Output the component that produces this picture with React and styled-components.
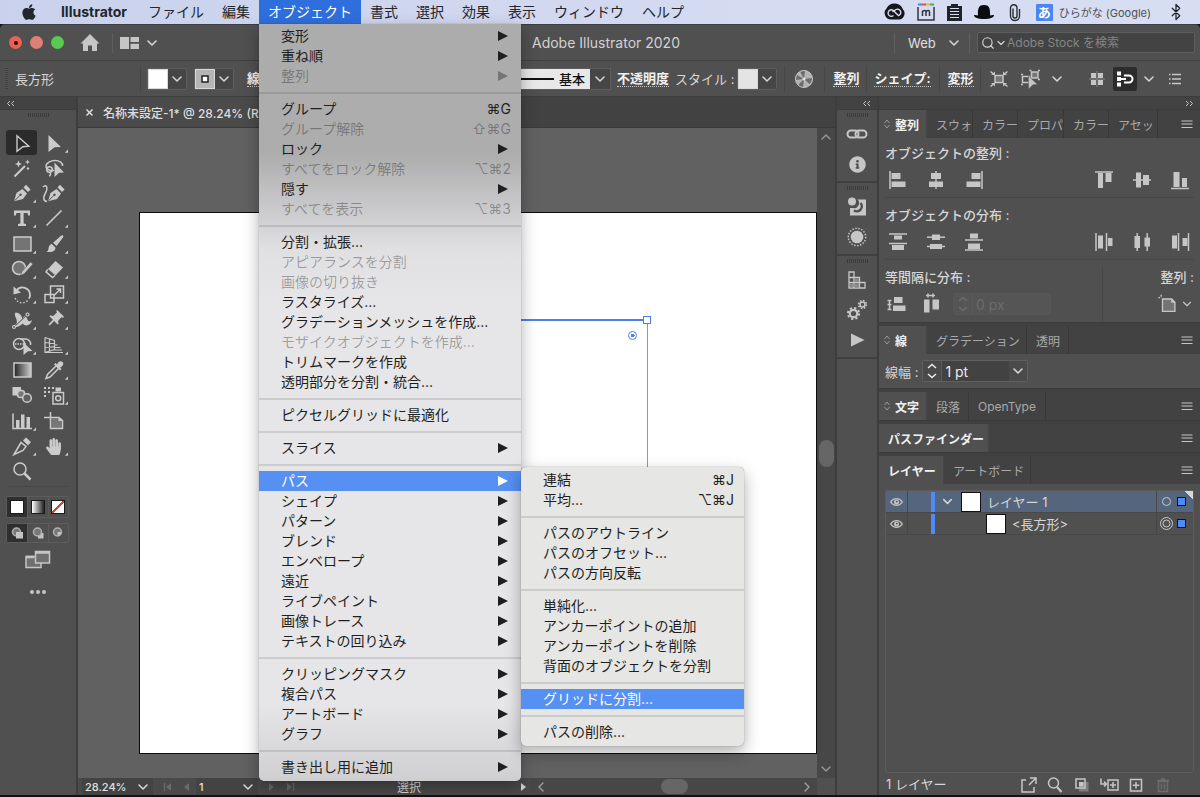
import React from 'react'
import styled, { createGlobalStyle, css } from 'styled-components'
import { FaApple, FaHandPaper, FaInfoCircle } from 'react-icons/fa'
import { MdPushPin } from 'react-icons/md'
import { Bluetooth, ChevronDown, ChevronLeft, ChevronRight, ChevronUp, Search } from 'lucide-react'

const GlobalStyle = createGlobalStyle`
    * { box-sizing: border-box; }
    body {
        margin: 0;
        background: #150f1c;
        font-family: Inter, "Noto Sans CJK JP", "DejaVu Sans", sans-serif;
        font-size: 13px;
        color: #d6d6d6;
    }
    button, input, select {
        font: inherit;
        color: inherit;
        margin: 0;
        padding: 0;
        border: 0;
        background: none;
        border-radius: 0;
    }
    svg { display: block; overflow: visible; flex: none; }
    h2 { margin: 0; font-size: 13px; font-weight: 500; }
`

/* ---------- layout ---------- */

const Screen = styled.div`
    min-height: 100vh;
    display: flex;
    flex-direction: column;
    padding-bottom: 2px;
`
const MenuBar = styled.nav`
    height: 24px;
    display: flex;
    align-items: stretch;
    background: linear-gradient(90deg, #c9d1ec, #d4daf0 60%, #d8def2);
    color: #22262e;
    font-size: 14px;
    position: relative;
    z-index: 5;
`
const AppleMark = styled.button`
    width: 49px;
    padding-left: 8px;
    display: grid;
    place-items: center;
`
const MenuTitle = styled.button`
    padding: 0 9px;
    height: 24px;
    line-height: 24px;
    white-space: nowrap;
    ${p => p.$app && css`width: 90px; padding: 0 5px; font-weight: 700;`}
    ${p => p.$open && css`background: #2f6fdd; color: #fff;`}
`
const MenuHolder = styled.div`
    position: relative;
`
const StatusIcons = styled.div`
    margin-left: auto;
    display: flex;
    align-items: center;
    gap: 12px;
    font-size: 11px;
    overflow: hidden;
    white-space: nowrap;
    padding-right: 15px;
`
const InputMode = styled.span`
    display: flex;
    align-items: center;
    gap: 6px;
    color: #4b505b;
    margin-right: 4px;
`
const Kana = styled.b`
    width: 17px;
    height: 17px;
    display: grid;
    place-items: center;
    background: #4a86f0;
    color: #fff;
    font-size: 13px;
    line-height: 17px;
    border-radius: 1px;
`
const Window = styled.main`
    flex: 1;
    display: flex;
    flex-direction: column;
    background: #3d3d3d;
    border-radius: 5px 5px 0 0;
`
const TitleBar = styled.header`
    height: 37px;
    display: grid;
    grid-template-columns: 1fr auto 1fr;
    align-items: center;
    background: #505050;
    border-top: 1px solid #3a3d46;
    border-bottom: 1px solid #404040;
    border-radius: 5px 5px 0 0;
    padding: 0 5px 0 9px;
`
const TitleSide = styled.div`
    display: flex;
    align-items: center;
    justify-content: ${p => p.$end ? 'flex-end' : 'flex-start'};
`
const Light = styled.button`
    width: 13px;
    height: 13px;
    margin-right: 8px;
    border-radius: 50%;
    background: ${p => p.$color};
    display: grid;
    place-items: center;
    &::after {
        content: '';
        width: 4px;
        height: 4px;
        border-radius: 50%;
        background: ${p => p.$dot ? '#3b0805' : 'transparent'};
    }
`
const IconButton = styled.button`
    width: ${p => p.$w || 24}px;
    height: ${p => p.$h || 24}px;
    display: grid;
    place-items: center;
    color: ${p => p.$dim ? '#6c6c6c' : '#c6c6c6'};
    border-radius: 2px;
    ${p => p.$on && css`background: #2c2c2c; color: #fff;`}
`
const Rule = styled.i`
    width: 1px;
    height: ${p => p.$h || 26}px;
    background: ${p => p.$light ? '#5f5f5f' : '#474747'};
    margin: 0 ${p => p.$m || 0}px;
`
const AppTitle = styled.h1`
    margin: 0;
    padding-left: 8px;
    font-size: 14px;
    font-weight: 400;
    color: #d2d2d2;
`
const SelectBox = styled.label`
    display: grid;
    grid-template-columns: 1fr ${p => p.$arrow || 20}px;
    align-items: center;
    height: ${p => p.$h || 22}px;
    color: #e0e0e0;
    ${p => p.$w && css`width: ${p.$w}px;`}
    select {
        grid-area: 1 / 1 / 2 / 3;
        appearance: none;
        width: 100%;
        height: 100%;
        outline: 0;
    }
    svg {
        grid-area: 1 / 2;
        justify-self: center;
        pointer-events: none;
    }
`
const StockSearch = styled.label`
    width: 218px;
    height: 21px;
    display: flex;
    align-items: center;
    padding: 0 3px;
    background: #434343;
    border: 1px solid #5e5e5e;
    border-radius: 2px;
    input {
        flex: 1;
        min-width: 0;
        font-size: 12px;
        outline: 0;
    }
    input::placeholder { color: #858585; opacity: 1; }
`
const ControlBar = styled.div`
    height: 36px;
    display: flex;
    align-items: center;
    background: #505050;
    border-bottom: 1px solid #3e3e3e;
    padding: 0 13px 0 5px;
    white-space: nowrap;
`
const ControlEnd = styled.div`
    margin-left: auto;
    display: flex;
    align-items: center;
    gap: 4px;
    > button:last-child { margin-left: 6px; }
`
const SideGrip = styled.i`
    width: 3px;
    height: 21px;
    background: repeating-linear-gradient(#3f3f3f 0 1px, #565656 1px 2px);
`
const ObjectKind = styled.span`
    width: 132px;
    padding-left: 7px;
`
const SwatchPicker = styled.div`
    display: flex;
    height: 22px;
    border: 1px solid #5e5e5e;
    border-radius: 2px;
    background: #464646;
    margin-left: ${p => p.$ml || 0}px;
`
const Swatch = styled.button`
    width: 20px;
    height: 20px;
    background: ${p => p.$color};
    border: 1px solid #d8d8d8;
    display: grid;
    place-items: center;
`
const StrokeGroup = styled.div`
    width: 377px;
    padding-left: 13px;
    display: flex;
    align-items: center;
    justify-content: space-between;
`
const OptionLink = styled.a`
    color: #f0f0f0;
    font-weight: 600;
    text-decoration: none;
    line-height: 15px;
    border-bottom: 1px dotted #c8c8c8;
    margin: 0 ${p => p.$m || 0}px;
`
const Profile = styled(SelectBox)`
    background: #464646;
    border: 1px solid #5e5e5e;
    select {
        grid-area: 1 / 1;
        color: #111;
        padding-left: 107px;
        font-weight: 500;
        font-size: 13px;
        background: linear-gradient(#111, #111) 0 50% / 102px 2px no-repeat, #e8e8e8;
    }
`
const Workspace = styled.div`
    flex: 1;
    display: grid;
    grid-template-columns: 76px minmax(0, 1fr) 40px 321px;
    gap: 2px;
`
const Column = styled.div`
    display: flex;
    flex-direction: column;
    background: ${p => p.$bg || '#505050'};
    min-width: 0;
`
const Collapse = styled.div`
    height: 13px;
    flex: none;
    background: #424242;
    border-bottom: 1px solid #3c3c3c;
    display: flex;
    align-items: center;
    justify-content: ${p => p.$side || 'flex-start'};
    padding: 0 6px;
    button { display: block; color: #c8c8c8; }
`
const Grip = styled.i`
    width: 21px;
    height: 4px;
    margin: ${p => p.$m || '3px auto 0'};
    background: repeating-linear-gradient(90deg, #3a3a3a 0 1px, #545454 1px 2px);
`

/* ---------- tool box ---------- */

const ToolGrid = styled.div`
    height: 354px;
    margin: 13px 0 0 6px;
    display: grid;
    grid-template-columns: 32px 32px;
    grid-auto-rows: 1fr;
`
const Tool = styled.button`
    display: grid;
    place-items: center;
    color: #cbcbcb;
    border-radius: 3px;
    width: 31px;
    ${p => p.$on && css`background: #2b2b2b;`}
`
const ModeRow = styled.div`
    display: grid;
    grid-template-columns: repeat(3, 1fr);
    width: 63px;
    height: ${p => p.$h}px;
    margin: ${p => p.$mt}px 0 0 6px;
    border: 1px solid #5c5c5c;
    border-radius: 2px;
    button { display: grid; place-items: center; color: #b0b0b0; }
    button + button { border-left: 1px solid #5c5c5c; }
    button:first-child { background: #2f2f2f; }
`
const Paint = styled.i`
    width: 14px;
    height: 14px;
    border: 1px solid #1b1b1b;
    background: ${p => p.$bg};
`
const ToolRule = styled.hr`
    width: 62px;
    border: 0;
    border-top: 1px solid #494949;
    margin: 2px 0 0 7px;
`
const Below = styled.div`
    display: flex;
    flex-direction: column;
    align-items: center;
    gap: 9px;
    padding-top: 4px;
`

/* ---------- document ---------- */

const Tabs = styled.div`
    height: 31px;
    flex: none;
    background: #424242;
    border-bottom: 1px solid #3a3a3a;
    display: flex;
`
const DocTab = styled.div`
    width: 268px;
    background: #4b4b4b;
    display: flex;
    align-items: center;
    gap: 10px;
    padding: 0 8px;
    font-size: 12px;
    font-weight: 500;
    color: #dedede;
    white-space: nowrap;
`
const DocArea = styled.div`
    flex: 1;
    display: grid;
    grid-template-columns: minmax(0, 1fr) 18px;
    grid-template-rows: 1fr 17px;
`
const Canvas = styled.div`
    background: #616161;
    padding: 84px 0 24px 61px;
    display: flex;
`
const Artboard = styled.div`
    flex: 1;
    position: relative;
    background: #fff;
    border: 1px solid #0c0c0c;
`
const SelectedPath = styled.div`
    position: absolute;
    left: 200px;
    top: 106px;
    width: 308px;
    height: 270px;
    border: 1px solid #6e9bf4;
    border-top: 2px solid #4a80ee;
`
const Anchor = styled.i`
    position: absolute;
    right: -4px;
    top: -5px;
    width: 8px;
    height: 8px;
    background: #fff;
    border: 1px solid #4a80ee;
`
const LiveCorner = styled.i`
    position: absolute;
    right: 10px;
    top: 10px;
    width: 9px;
    height: 9px;
    border: 1px solid #4a80ee;
    border-radius: 50%;
    background: radial-gradient(#4a80ee 0 2px, #fff 2px);
`
const VScroll = styled.div`
    background: #474747;
    color: #9a9a9a;
    display: flex;
    flex-direction: column;
    align-items: center;
    justify-content: space-between;
    padding: 1px 0;
`
const Thumb = styled.i`
    width: ${p => p.$w}px;
    height: ${p => p.$h}px;
    border-radius: 8px;
    background: #666;
`
const StatusBar = styled.div`
    background: #4a4a4a;
    display: flex;
    align-items: stretch;
    font-size: 12px;
    padding-left: 4px;
    min-width: 0;
    height: 17px;
`
const StatusCell = styled.div`
    width: ${p => p.$w}px;
    display: flex;
    align-items: center;
    justify-content: center;
    gap: 8px;
    color: ${p => p.$dim ? '#6a6a6a' : '#d6d6d6'};
    white-space: nowrap;
`
const StatusSelect = styled(SelectBox)`
    height: 17px;
    margin-right: ${p => p.$mr || 0}px;
    background: #434343;
    select { font-size: 11px; font-weight: 500; padding-left: 3px; }
`
const HScroll = styled.div`
    flex: 1;
    background: #474747;
    color: #a0a0a0;
    display: flex;
    align-items: center;
    justify-content: space-between;
    padding: 0 2px;
`

/* ---------- dropdown menus ---------- */

const Sheet = styled.ul`
    position: absolute;
    list-style: none;
    margin: 0;
    color: #1f1f21;
    font-size: 14px;
    box-shadow: 0 6px 16px rgba(0, 0, 0, .32), 0 0 1px rgba(0, 0, 0, .5);
    ${p => p.$sub ? css`
        left: 100%;
        top: -4px;
        width: 223px;
        padding: 3px 0 4px;
        background: #e6e6e4;
        border-radius: 5px;
        z-index: 2;
    ` : css`
        left: 0;
        top: 100%;
        width: 262px;
        padding: 2px 0 4px;
        background: linear-gradient(#acacac 0, #adadae 130px, #cacacc 185px, #e0e0e3 225px, #e6e6e9 280px, #e6e6e9 680px, #cfcfd2 100%);
        border-radius: 0 0 5px 5px;
        z-index: 1;
    `}
`
const Entry = styled.li`
    position: relative;
`
const EntryButton = styled.button`
    width: 100%;
    height: 20px;
    display: flex;
    align-items: center;
    justify-content: space-between;
    padding: 0 10px 0 22px;
    line-height: 20px;
    white-space: nowrap;
    &:disabled { color: rgba(0, 0, 0, .32); }
    ${p => p.$on && css`background: #5690f3; color: #fff;`}
`
const Arrow = styled.i`
    border-left: 10px solid currentColor;
    border-top: 5px solid transparent;
    border-bottom: 5px solid transparent;
    margin-right: 3px;
`
const Split = styled.li`
    height: 13px;
    padding-top: 6px;
    &::after {
        content: '';
        display: block;
        height: 2px;
        background: rgba(0, 0, 0, .11);
    }
`

/* ---------- panels ---------- */

const DockGroup = styled.div`
    border-bottom: 2px solid #404040;
    display: flex;
    flex-direction: column;
    align-items: center;
    padding-bottom: 2px;
    button { height: 30px; }
`
const Panel = styled.section`
    background: #505050;
    border-bottom: 1px solid #3c3c3c;
    margin-bottom: 3px;
    display: flex;
    flex-direction: column;
    ${p => p.$grow && css`flex: 1; margin: 0; border: 0;`}
`
const PanelTabs = styled.div`
    height: 28px;
    display: flex;
    background: #424242;
    > button:last-child { margin-left: auto; margin-right: 1px; height: 28px; }
`
const PanelTab = styled.button`
    width: ${p => p.$w}px;
    padding-left: ${p => p.$arrows ? 5 : 9}px;
    text-align: left;
    overflow: hidden;
    white-space: nowrap;
    font-size: 12px;
    color: #a9a9a9;
    border-right: 1px solid #383838;
    display: flex;
    align-items: center;
    gap: 5px;
    ${p => p.$on && css`background: #505050; color: #f0f0f0; font-weight: 700; border-color: #464646;`}
`
const AlignBody = styled.div`
    padding: 5px 6px 0;
    h2 { height: 20px; line-height: 20px; }
`
const AlignRow = styled.div`
    display: flex;
    align-items: center;
    justify-content: space-between;
    height: 35px;
    padding: 0 2px 0 1px;
    margin-bottom: 7px;
    border-bottom: 1px solid #474747;
`
const IconSet = styled.div`
    display: flex;
    gap: ${p => p.$gap || 14}px;
`
const SpacingRow = styled.div`
    display: grid;
    grid-template-columns: 1fr 92px;
    height: 55px;
    > div:last-child {
        border-left: 1px solid #474747;
        display: flex;
        flex-direction: column;
        align-items: flex-end;
        gap: 5px;
    }
`
const SpacingTools = styled.div`
    display: flex;
    align-items: center;
    gap: 10px;
    margin-top: 5px;
`
const NumberBox = styled.div`
    display: flex;
    align-items: stretch;
    height: 22px;
    width: ${p => p.$w}px;
    border: 1px solid ${p => p.$off ? '#575757' : '#606060'};
    border-radius: 2px;
    color: ${p => p.$off ? '#6c6c6c' : '#ececec'};
    background: ${p => p.$off ? '#555' : '#424242'};
    button {
        width: 18px;
        display: grid;
        place-items: center;
        background: ${p => p.$off ? 'none' : '#4a4a4a'};
    }
    input {
        flex: 1;
        min-width: 0;
        font-size: 14px;
        padding-left: 3px;
        border-left: 1px solid #5b5b5b;
        outline: 0;
    }
    input:disabled { color: #6c6c6c; }
`
const StrokeBody = styled.div`
    height: 34px;
    padding: 0 6px;
    display: flex;
    align-items: center;
    gap: 4px;
`
const LayerList = styled.ul`
    list-style: none;
    flex: 1;
    margin: 6px 6px 0;
    padding: 0;
    border: 1px solid #5c5c5c;
    border-radius: 2px;
`
const LayerRow = styled.li`
    height: 22px;
    display: flex;
    align-items: center;
    font-size: 13px;
    border-bottom: 1px solid #484848;
    background: ${p => p.$on ? 'linear-gradient(225deg, #d8d8d8 6px, #54657c 6px)' : 'transparent'};
`
const EyeCell = styled.button`
    width: 22px;
    height: 22px;
    display: grid;
    place-items: center;
    color: #c3c3c3;
    border-right: 1px solid #474747;
`
const ColorBar = styled.i`
    width: 4px;
    height: 20px;
    background: #4f8bf6;
    margin: 0 ${p => p.$nested ? 51 : 5}px 0 23px;
`
const LayerThumb = styled.i`
    width: 20px;
    height: 20px;
    margin: 0 6px 0 ${p => p.$nested ? 0 : 6}px;
    background: #fff;
    border: 1px solid #111;
`
const Target = styled.span`
    margin-left: auto;
    width: 37px;
    height: 22px;
    border-left: 1px solid #474747;
    display: flex;
    align-items: center;
    gap: 4px;
    padding-left: 3px;
`
const SelectedMark = styled.i`
    width: 9px;
    height: 9px;
    background: #4f8bf6;
    border: 1px solid #111;
`
const LayerFooter = styled.footer`
    height: 22px;
    padding: 0 25px 2px 7px;
    display: flex;
    align-items: center;
    justify-content: space-between;
`

/* ---------- drawings ---------- */

const s = { fill: 'none', stroke: 'currentColor', strokeWidth: 1.5 }

const nib = (
    <>
        <path d="M4 20.300L6.500 12L12.500 8L17 12.500L13 18z" fill="currentColor" />
        <path d="M13.500 6.500L16 3.800L20.600 8.400L18 11z" fill="currentColor" />
        <path d="M4.500 19.800L10 14.300" stroke="#505050" />
        <circle cx="10.500" cy="13.700" r="1.200" fill="#505050" />
    </>
)

// blocks plus guide lines, shared by all the align / distribute buttons
const blocks = (rects, lines) => (
    <>
        {rects.map((r, i) => <rect key={i} x={r[0]} y={r[1]} width={r[2]} height={r[3]} fill="currentColor" />)}
        {lines.map((d, i) => <path key={'l' + i} d={d} stroke="currentColor" strokeWidth="1.500" />)}
    </>
)

const icons = {
    select: <path d="M7 4.800L18.800 15.300L12.800 15.800L7 20.300z" {...s} strokeWidth="1.400" />,
    direct: <path d="M6.500 4L19 16L12.500 16.300L6.500 21z" fill="currentColor" />,
    wand: <><path d="M4.500 20.500L15 10" stroke="currentColor" strokeWidth="2" /><path d="M8.500 4.500l1 2.500 2.500 1-2.500 1-1 2.500-1-2.500-2.500-1 2.500-1zM17.500 3.500l.7 1.800 1.800.7-1.800.7-.7 1.800-.7-1.800-1.800-.7 1.800-.7zM18 11l1.500 1.500-1.500 1.500-1.500-1.500z" fill="currentColor" /></>,
    lasso: <><path d="M12 14.500C6 15 3.500 12 4 9.500S8.500 4.500 13 4.500s8 2.500 7.500 5.500" {...s} /><circle cx="7.500" cy="13.500" r="2.800" {...s} /><path d="M8 16.500c1 1.500.5 3-1 3.500" {...s} /><path d="M12.500 6.500L22 16.500l-4.800.3-4.700 4.200z" fill="currentColor" /></>,
    pen: nib,
    curve: <><g transform="translate(2 0)">{nib}</g><path d="M1 6C5 2 6 8 3.500 12S1 20 5 20.500" {...s} /></>,
    type: <path d="M4 4.500h16v5h-1.800L17.500 7H13.600V17.600l2.400.4V20H8v-2l2.400-.4V7H6.500L5.800 9.500H4z" fill="currentColor" />,
    line: <path d="M4.500 19.500L19.500 4.500" stroke="currentColor" strokeWidth="1.600" />,
    rect: <rect x="4" y="5" width="17" height="14" {...s} fill="#747474" />,
    brush: <><path d="M21 3.500c.6.600.4 1.300-.2 2.200L14.500 14 11 10.800l8-7c.8-.600 1.500-.800 2-.300zM9.800 12l3.600 3.400c.3 3-2.400 5.200-9 4.600 2.500-1.200 1.800-3 2.500-5.200.4-1.500 1.600-2.600 2.900-2.800z" fill="currentColor" /></>,
    shaper: <><circle cx="9" cy="11" r="6.500" {...s} fill="#747474" /><path d="M12 14.500L20.500 5l2.500 2-8.500 9.500-4 2z" fill="currentColor" stroke="#505050" strokeWidth=".6" /></>,
    eraser: <><path d="M13.500 4L21 10.500 13.500 18.500 6 12z" fill="currentColor" /><path d="M5.800 12.500L4 14.800 10.500 20.500 13 18.500" {...s} /></>,
    rotate: <><path d="M6.500 8.500A7.500 7.500 0 0 1 20 13c0 1.500-.4 2.600-1 3.600" {...s} strokeWidth="1.800" /><path d="M3.500 4.500v8l7.500-2z" fill="currentColor" /><path d="M17.500 18.600A7.500 7.500 0 0 1 4.800 14.500" {...s} strokeDasharray="1.500 1.800" /></>,
    scale: <><rect x="8.500" y="4" width="13" height="12" {...s} /><rect x="3" y="12.500" width="9" height="8" {...s} /><path d="M12 13.500L18.500 7M14.500 7h4v4" {...s} /></>,
    width: <><path d="M5.500 4.500c4 0 6.500 3 7 7 1.500-5 3.500-4 4.500-1s2.500 3.500 5 1.500c-1 5.500-6.500 7-9.500 3.500C9.500 19 5 20 3 17.500c3.500-.5 4.500-2.500 3.500-6S4 7 5.500 4.500z" fill="currentColor" /><path d="M4.500 18.500L17 7" stroke="#505050" /><circle cx="4" cy="19" r="1.500" {...s} strokeWidth="1.200" /><circle cx="17.500" cy="6.500" r="1.500" {...s} strokeWidth="1.200" /></>,
    shape: <><circle cx="9" cy="11" r="5.500" {...s} /><path d="M10 6h6a5 5 0 0 1 4.500 6" {...s} /><path d="M5 11h11" {...s} strokeDasharray="1.500 1" /><path d="M13.500 9.500l9 8.500-4.500.3-4.500 3.700z" fill="currentColor" /></>,
    perspective: <path d="M3 4.500v15h8M3 4.500l9.500 3v9L3 19.500M7.500 6v12M3 9.500l9.500 1M3 14.500l9.500-.8M12.500 12l3 0M12.500 14.500h6M11 17h9M10 19.500h11" {...s} strokeWidth="1.200" />,
    gradient: <><defs><linearGradient id="tg"><stop stopColor="#222" /><stop offset="1" stopColor="#ccc" /></linearGradient></defs><rect x="4" y="5" width="17" height="14" {...s} fill="url(#tg)" /></>,
    dropper: <><path d="M14 8L5.500 16.500 4 20.500l4-1.500L16.500 10.500" {...s} /><path d="M12 6.500l6 6 1.500-1.500-1.500-1.500c3.500-1.500 4-4 2.500-5.500s-4-1-5.500 2.500L13.500 5z" fill="currentColor" /></>,
    blend: <><rect x="2.500" y="4" width="8.500" height="8.500" fill="currentColor" /><rect x="7.500" y="7.500" width="7" height="7" rx="3" {...s} fill="#777" /><circle cx="17" cy="15" r="4.300" {...s} fill="#606060" /></>,
    spray: <><rect x="11" y="9.500" width="10.500" height="11.500" {...s} /><rect x="13.500" y="4.500" width="5.500" height="4" fill="currentColor" /><circle cx="16.200" cy="15.200" r="2.500" {...s} /><path d="M2 5h2M6 5h2M10 5h2M2 9h2M6 9h2M2 13h2" stroke="currentColor" strokeWidth="2" /></>,
    graph: <><path d="M3 4.500v15h19" {...s} /><path d="M6 19v-8h3.500v8zM11 19V5.500h3.500V19zM16.500 19V8H20v11z" fill="currentColor" /></>,
    artboard: <><path d="M9.500 9.500H16l3.500 3.500v6h-10z" fill="#777" /><path d="M8.500 3v16.500h12v-8L17 8.500H2" {...s} /><path d="M16.500 8l4.500 4h-4.500z" fill="currentColor" /></>,
    slice: <><path d="M4 20.500L11 8.500 16 12.500 13 16.500z" {...s} /><path d="M13 6.500L16 3.500 21 8 18 11.500z" fill="currentColor" /></>,
    zoom: <><circle cx="10" cy="10" r="6" {...s} /><path d="M14.500 14.500L20.500 20.500" stroke="currentColor" strokeWidth="2.500" /></>,
    screens: <><rect x="0" y="9.500" width="15" height="11" {...s} fill="#6f6f6f" /><rect x="9.500" y="4.500" width="14" height="11.500" {...s} fill="#6f6f6f" /><path d="M9 5.500h15M0 10h8" stroke="currentColor" strokeWidth="2.500" /></>,
    home: <path d="M12 3L21.500 12.500H19V20h-5v-5.500h-4V20H5v-7.500H2.500z" fill="currentColor" />,
    arrange: <path d="M2 6h9v12H2zM12.500 6H21v5h-8.500zM12.500 12.800H21V18h-8.500z" fill="currentColor" />,
    wheel: <><circle cx="12" cy="12" r="8.500" fill="#b4b4b4" /><path d="M12 12L8 4.500a8.500 8.500 0 0 1 5-1zM12 12l8.500-1a8.500 8.500 0 0 1-3 6zM12 12l-1 8.500a8.500 8.500 0 0 1-5-2.500zM12 12l-8.500 1a8.500 8.500 0 0 1 1.500-5z" fill="#6c6c6c" /><circle cx="12" cy="12" r="8.500" {...s} strokeWidth="1" /><circle cx="12" cy="12" r="1.500" fill="#e4e4e4" /></>,
    transformEach: <><rect x="8" y="8.500" width="8" height="7" {...s} fill="#777" /><path d="M3.500 4.500l3 2.500M20.500 4.500l-3 2.500M3.500 19.500l3-2.500M20.500 19.500l-3-2.500" {...s} /><path d="M8 4.500V8H4zM16 4.500V8h4zM8 19.500V16H4zM16 19.500V16h4z" fill="currentColor" /></>,
    isolate: <><rect x="4.500" y="9.500" width="7" height="6" {...s} /><path d="M3 7.500h2M3 17.500h2" {...s} /><rect x="13.500" y="5" width="6.500" height="6" {...s} fill="#777" /><path d="M11.500 3.500h2M20 3.500h2M20 12.500h2" {...s} /><path d="M10.500 9l9 8.500-4.500.3-4.500 4.200z" fill="currentColor" stroke="#505050" strokeWidth=".5" /></>,
    snapGrid: <><path d="M6 6h5v5H6zM13 6h5v5h-5zM6 13h5v5H6zM13 13h5v5h-5z" fill="currentColor" /><path d="M12 4v16M4 12h16" stroke="#888" /></>,
    snap: <><path d="M4 4.500h4v4H4zM4 10h4v4H4zM4 15.500h4v4H4z" fill="currentColor" /><path d="M11 8.500h5a3.500 3.500 0 0 1 0 7h-5M8 12h5" {...s} strokeWidth="2" /></>,
    list: <path d="M6 7.500h1.500M6 12h1.500M6 16.500h1.500M9 7.500h9M9 12h9M9 16.500h9" stroke="currentColor" strokeWidth="1.400" />,
    burger: <path d="M6.500 9h11M6.500 12h11M6.500 15.500h11" stroke="currentColor" strokeWidth="1.200" />,
    link: <><rect x="2.500" y="8.500" width="11" height="7" rx="3.500" {...s} strokeWidth="2" /><rect x="10.500" y="8.500" width="11" height="7" rx="3.500" {...s} strokeWidth="2" /></>,
    asset: <><path d="M12.500 4.500h8.500v16H5v-7.500h3a5 5 0 0 0 4.500-8.500z" fill="currentColor" /><circle cx="7" cy="6.500" r="4" fill="currentColor" /><path d="M15.500 8a5 5 0 0 1-6.500 7.500" {...s} stroke="#505050" strokeWidth="2.500" /></>,
    appearance: <><circle cx="12" cy="12" r="6.300" fill="currentColor" /><circle cx="12" cy="12" r="8.700" {...s} strokeDasharray="1.500 1.500" /></>,
    swatches: <><path d="M4 4h5v16H4zM4 9.500h10.500V20M4 14.500h16V20H4M14.500 14.500V20" {...s} strokeWidth="1.300" /><path d="M5 15.500h3v4H5zM9.500 15.500h4.500v4H9.500zM9.500 10.500h4.500v3.500H9.500z" fill="#8b8b8b" /></>,
    gears: <><circle cx="8.500" cy="15.500" r="3.700" {...s} strokeWidth="2.200" /><circle cx="8.500" cy="15.500" r="5.600" {...s} strokeWidth="2" strokeDasharray="2.200 2.200" /><circle cx="17.500" cy="6.500" r="2.500" {...s} strokeWidth="1.600" /><circle cx="17.500" cy="6.500" r="4" {...s} strokeDasharray="1.600 1.540" /></>,
    play: <path d="M6 5.500L19.500 12 6 18.500z" fill="currentColor" />,
    hLeft: blocks([[5.500, 5, 9, 6], [5.500, 13.500, 14, 5.500]], ['M4 3v18']),
    hCenter: blocks([[7, 5, 10, 6], [5, 13.500, 14, 5.500]], ['M12 3v18']),
    hRight: blocks([[9.500, 5, 9, 6], [4.500, 13.500, 14, 5.500]], ['M20 3v18']),
    vTop: blocks([[6, 5, 5, 15], [13.500, 5, 6, 9]], ['M3 4h18']),
    vMiddle: blocks([[6, 4.500, 5, 15], [13, 7, 6, 10]], ['M3 12h18']),
    vBottom: blocks([[5.500, 4, 6, 15], [14, 10, 5, 9]], ['M3 20.500h18']),
    dTop: blocks([[8, 5.500, 8, 4], [6, 15, 12, 5]], ['M3 4h18', 'M3 13.500h18']),
    dMiddle: blocks([[8, 4.500, 8, 5.500], [6, 14, 12, 5]], ['M3 7.200h18', 'M3 16.500h18']),
    dBottom: blocks([[8, 3.500, 8, 5], [6, 13.500, 12, 5.500]], ['M3 10h18', 'M3 20h18']),
    dLeft: blocks([[6, 5.500, 5, 13], [16, 8, 4.500, 8]], ['M4 3v18', 'M14.500 3v18']),
    dCenter: blocks([[4.500, 6, 5.500, 12], [14.500, 7.500, 5.500, 9]], ['M7.200 3v18', 'M17.200 3v18']),
    dRight: blocks([[4, 5.500, 5, 13], [14.500, 8, 5, 8]], ['M10.500 3v18', 'M20.500 3v18']),
    vSpace: blocks([[9, 5, 8.500, 6], [8, 13.500, 12.500, 5.500]], ['M4.500 8v10', 'M2.500 8.500h4', 'M2.500 12.500h4', 'M2.500 17.500h4']),
    hSpace: blocks([[5, 7.500, 5.500, 13], [13.500, 7.500, 6.500, 10]], ['M7 3.500h9', 'M9 1.500v4', 'M14 1.500v4']),
    alignTo: <><path d="M6 6.500h10l3.500 3.500v10H6z" {...s} fill="#747474" /><path d="M1.500 5h2M4.500 2v2" {...s} /><path d="M15.500 6v4.500H20z" fill="currentColor" /></>,
    export: <path d="M10 7H6v12h12v-5M14 5h6v6M19.500 5.500L13 12" {...s} />,
    find: <><circle cx="10.500" cy="10" r="5" {...s} /><path d="M14 14l4.500 5" stroke="currentColor" strokeWidth="2.200" /></>,
    mask: <><path d="M9 9h9.500v9.500H9z" fill="#7c7c7c" /><rect x="6" y="6" width="9" height="9" {...s} /><path d="M9 9h4.500v4.500H9z" fill="currentColor" /></>,
    sublayer: <><rect x="11" y="7" width="10" height="10" {...s} /><path d="M16 9v6M13 12h6M4 5.500V11h5M7 8.500L9.500 11 7 13.500" {...s} /></>,
    add: <><rect x="6.500" y="6.500" width="11" height="11.500" {...s} /><path d="M12 9v6.500M8.800 12.200h6.500" {...s} /></>,
    trash: <path d="M7.500 8.500h9v10h-9zM6 7.500h12M10 6h4M10.500 10.500v6M13.500 10.500v6" {...s} />,
}

const Icon = ({ name, size = 24, more }) => (
    <svg width={size} height={size} viewBox="0 0 24 24" aria-hidden="true">
        {icons[name]}
        {more && <path d="M26 18.500v3.200h-3.200z" fill="currentColor" />}
    </svg>
)

const Down = ({ size = 16 }) => <ChevronDown size={size} strokeWidth={2.4} color="#d4d4d4" />

const Chevrons = ({ flip }) => (
    <svg width="9" height="7" viewBox="0 0 9 7">
        <path d={flip ? 'M1 1l2.500 2.500L1 6M5 1l2.500 2.500L5 6' : 'M4 1L1.500 3.500 4 6M8 1L5.500 3.500 8 6'} fill="none" stroke="currentColor" />
    </svg>
)
const Diamond = () => (
    <svg width="6" height="10" viewBox="0 0 6 10">
        <path d="M.5 4L3 1l2.500 3M.5 6L3 9l2.500-3" fill="none" stroke="#9a9a9a" />
    </svg>
)
const Eye = () => (
    <svg width="13" height="10" viewBox="0 0 13 10">
        <path d="M.7 5C3.500.5 9.500.5 12.300 5 9.500 9.500 3.500 9.500.7 5z" fill="none" stroke="currentColor" strokeWidth="1.400" />
        <circle cx="6.500" cy="5" r="2.500" fill="currentColor" />
        <circle cx="6.800" cy="4.600" r=".9" fill="#505050" />
    </svg>
)
const Stepper = () => (
    <svg width="10" height="16" viewBox="0 0 10 16">
        <path d="M1 5l4-3.500L9 5M1 11l4 3.500L9 11" fill="none" stroke="currentColor" strokeWidth="1.500" />
    </svg>
)

/* ---------- data ---------- */

const tools = [
    ['select', '選択ツール'], ['direct', 'ダイレクト選択', 1],
    ['wand', '自動選択'], ['lasso', 'なげなわ'],
    ['pen', 'ペン', 1], ['curve', '曲線'],
    ['type', '文字', 1], ['line', '直線', 1],
    ['rect', '長方形ツール', 1], ['brush', 'ブラシ', 1],
    ['shaper', 'Shaper', 1], ['eraser', '消しゴム', 1],
    ['rotate', '回転', 1], ['scale', '拡大・縮小', 1],
    ['width', '線幅ツール', 1], ['pin', 'パペットワープ', 1],
    ['shape', 'シェイプ形成', 1], ['perspective', '遠近グリッド', 1],
    ['gradient', 'グラデーションツール'], ['dropper', 'スポイト', 1],
    ['blend', 'ブレンドツール'], ['spray', 'シンボルスプレー', 1],
    ['graph', '棒グラフ', 1], ['artboard', 'アートボードツール'],
    ['slice', 'スライスツール', 1], ['hand', '手のひら', 1],
    ['zoom', 'ズーム'],
]

// a string is a plain entry, '-' a separator
const pathMenu = [
    { label: '連結', keys: '⌘J' },
    { label: '平均...', keys: '⌥⌘J' },
    '-',
    'パスのアウトライン', 'パスのオフセット...', 'パスの方向反転',
    '-',
    '単純化...', 'アンカーポイントの追加', 'アンカーポイントを削除', '背面のオブジェクトを分割',
    '-',
    { label: 'グリッドに分割...', on: true },
    '-',
    'パスの削除...',
]
const sub = label => ({ label, more: true })
const off = (label, keys) => ({ label, keys, disabled: true })

const objectMenu = [
    sub('変形'), sub('重ね順'), { label: '整列', more: true, disabled: true },
    '-',
    { label: 'グループ', keys: '⌘G' }, off('グループ解除', '⇧⌘G'), sub('ロック'),
    off('すべてをロック解除', '⌥⌘2'), sub('隠す'), off('すべてを表示', '⌥⌘3'),
    '-',
    '分割・拡張...', off('アピアランスを分割'), off('画像の切り抜き'), 'ラスタライズ...',
    'グラデーションメッシュを作成...', off('モザイクオブジェクトを作成...'), 'トリムマークを作成', '透明部分を分割・統合...',
    '-',
    'ピクセルグリッドに最適化',
    '-',
    sub('スライス'),
    '-',
    { label: 'パス', more: true, on: true, items: pathMenu },
    sub('シェイプ'), sub('パターン'), sub('ブレンド'), sub('エンベロープ'), sub('遠近'),
    sub('ライブペイント'), sub('画像トレース'), sub('テキストの回り込み'),
    '-',
    sub('クリッピングマスク'), sub('複合パス'), sub('アートボード'), sub('グラフ'),
    '-',
    sub('書き出し用に追加'),
]

function Menu({ items, nested }) {
    return (
        <Sheet $sub={nested}>
            {items.map((it, i) => {
                if (it === '-') return <Split key={i} role="separator" />
                const item = typeof it === 'string' ? { label: it } : it
                return (
                    <Entry key={i}>
                        <EntryButton $on={item.on} disabled={item.disabled}>
                            <span>{item.label}</span>
                            {item.more ? <Arrow /> : <span>{item.keys}</span>}
                        </EntryButton>
                        {item.items && <Menu items={item.items} nested />}
                    </Entry>
                )
            })}
        </Sheet>
    )
}

function Tabset({ tabs }) {
    return (
        <PanelTabs>
            {tabs.map(([label, w, on, arrows], i) => (
                <PanelTab key={i} $w={w} $on={on} $arrows={arrows}>
                    {arrows && <Diamond />}
                    {label}
                </PanelTab>
            ))}
            <IconButton aria-label="パネルメニュー"><Icon name="burger" /></IconButton>
        </PanelTabs>
    )
}

const Buttons = ({ names, gap }) => (
    <IconSet $gap={gap}>
        {names.map(n => <IconButton key={n} aria-label={n}><Icon name={n} /></IconButton>)}
    </IconSet>
)

function TopMenu() {
    return (
        <MenuBar>
            <AppleMark aria-label="Apple"><FaApple size={18} /></AppleMark>
            <MenuTitle $app>Illustrator</MenuTitle>
            <MenuTitle>ファイル</MenuTitle>
            <MenuTitle>編集</MenuTitle>
            <MenuHolder>
                <MenuTitle $open>オブジェクト</MenuTitle>
                <Menu items={objectMenu} />
            </MenuHolder>
            {['書式', '選択', '効果', '表示', 'ウィンドウ', 'ヘルプ'].map(m => <MenuTitle key={m}>{m}</MenuTitle>)}
            <StatusIcons>
                <svg width="21" height="16" viewBox="0 0 21 16">
                    <path d="M7 15.500A6.500 6.500 0 0 1 2.500 4.500 9 9 0 0 1 19 5.500a6 6 0 0 1-4 10z" fill="#15171c" />
                    <path d="M9.500 11.500L8 12.300a3.300 3.300 0 1 1 1.200-6l4.800 5M8.500 8l3.500-2.500a3.300 3.300 0 1 1 2 6.200" fill="none" stroke="#d6dcf1" strokeWidth="1.400" />
                </svg>
                <svg width="18" height="18" viewBox="0 0 18 18">
                    <path d="M1 4v13h16V4" fill="none" stroke="#33363d" strokeWidth="1.500" />
                    <path d="M1 1.500h4" stroke="#4a86f0" strokeWidth="2" />
                    <path d="M5 1.500h4" stroke="#e2503f" strokeWidth="2" />
                    <path d="M9 1.500h4" stroke="#eeb440" strokeWidth="2" />
                    <path d="M13 1.500h4" stroke="#4aa860" strokeWidth="2" />
                    <path d="M5.500 13V7.500M5.500 9c1-2 3.500-2 3.500 0v4M9 9c1-2 3.500-2 3.500 0v4" fill="none" stroke="#33363d" strokeWidth="1.500" />
                </svg>
                <svg width="15" height="18" viewBox="0 0 15 18">
                    <path d="M0 3h4V1h7v2h4v15H0z" fill="#202329" />
                    <path d="M3 5.500h9M3 8.500h9M3 11.500h9M3 14.500h9" stroke="#d6dcf1" />
                </svg>
                <svg width="20" height="14" viewBox="0 0 20 14">
                    <path d="M4 10.500C3.500 3 5 0 10 0s6.500 3 6 10.500c2-.2 3-.8 4-.3-.5 2.500-4 3.800-10 3.800S.5 12.700 0 10.200c1-.5 2 .1 4 .3z" fill="#0b0c0f" />
                </svg>
                <svg width="18" height="17" viewBox="0 0 18 17">
                    <path d="M11 4v8a2 2 0 0 1-4 0V4.500M13.500 5v7a4.500 4.500 0 0 1-9 0V4a3.200 3.200 0 0 1 6.500 0" fill="none" stroke="#2a2d34" strokeWidth="1.400" />
                </svg>
                <InputMode><Kana>あ</Kana>ひらがな (Google)</InputMode>
                <Bluetooth size={18} strokeWidth={1.7} />
            </StatusIcons>
        </MenuBar>
    )
}

function Header() {
    return (
        <>
            <TitleBar>
                <TitleSide>
                    <Light $color="#ec5f55" $dot aria-label="閉じる" />
                    <Light $color="#dd8075" aria-label="しまう" />
                    <Light $color="#59c94f" aria-label="拡大" />
                    <IconButton $w={36} aria-label="ホーム"><Icon name="home" /></IconButton>
                    <Rule $h={20} $m={4} $light />
                    <IconButton $w={26} aria-label="ドキュメントの配置"><Icon name="arrange" /></IconButton>
                    <IconButton $w={18} aria-label="配置メニュー"><Down /></IconButton>
                </TitleSide>
                <AppTitle>Adobe Illustrator 2020</AppTitle>
                <TitleSide $end>
                    <Rule $h={20} $m={13} $light />
                    <SelectBox $w={54} $arrow={16}>
                        <select aria-label="ワークスペース" defaultValue="Web"><option>Web</option></select>
                        <Down />
                    </SelectBox>
                    <Rule $h={20} $m={7} $light />
                    <StockSearch>
                        <Search size={14} /><Down size={12} />
                        <input placeholder="Adobe Stock を検索" aria-label="Adobe Stock を検索" />
                    </StockSearch>
                </TitleSide>
            </TitleBar>
            <ControlBar>
                <SideGrip />
                <ObjectKind>長方形</ObjectKind>
                <Rule />
                <SwatchPicker $ml={6}>
                    <Swatch $color="#fff" aria-label="塗り" />
                    <IconButton $w={18} $h={20} aria-label="塗りを選ぶ"><Down /></IconButton>
                </SwatchPicker>
                <SwatchPicker $ml={7}>
                    <Swatch $color="#b5b5b5" aria-label="線の色">
                        <svg width="8" height="8"><rect x="1" y="1" width="6" height="6" fill="#fff" stroke="#222" strokeWidth="1.500" /></svg>
                    </Swatch>
                    <IconButton $w={18} $h={20} aria-label="線の色を選ぶ"><Down /></IconButton>
                </SwatchPicker>
                <StrokeGroup>
                    <OptionLink href="#stroke">線 :</OptionLink>
                    <Profile $w={160}>
                        <select aria-label="ブラシ定義" defaultValue="基本"><option>基本</option></select>
                        <Down />
                    </Profile>
                </StrokeGroup>
                <OptionLink href="#opacity" $m={6}>不透明度</OptionLink>
                <span>スタイル :</span>
                <SwatchPicker $ml={3}>
                    <Swatch $color="#e4e4e4" aria-label="スタイル" />
                    <IconButton $w={18} $h={20} aria-label="スタイルを選ぶ"><Down /></IconButton>
                </SwatchPicker>
                <Rule $m={7} />
                <IconButton aria-label="オブジェクトを再配色"><Icon name="wheel" /></IconButton>
                <Rule $m={8} />
                <OptionLink href="#align">整列</OptionLink>
                <Rule $m={7} />
                <OptionLink href="#shape">シェイプ:</OptionLink>
                <Rule $m={8} />
                <OptionLink href="#transform">変形</OptionLink>
                <Rule $m={6} />
                <IconButton aria-label="個別に変形"><Icon name="transformEach" /></IconButton>
                <IconButton $w={38} aria-label="編集モード"><Icon name="isolate" /></IconButton>
                <IconButton $w={12} aria-label="編集メニュー"><Down /></IconButton>
                <ControlEnd>
                    <IconButton aria-label="グリッドに整合"><Icon name="snapGrid" /></IconButton>
                    <IconButton $on aria-label="ピクセルに整合"><Icon name="snap" /></IconButton>
                    <IconButton $w={12} aria-label="整合メニュー"><Down /></IconButton>
                    <IconButton aria-label="コントロールメニュー"><Icon name="list" /></IconButton>
                </ControlEnd>
            </ControlBar>
        </>
    )
}

function ToolBox() {
    return (
        <Column>
            <Collapse><button aria-label="折りたたむ"><Chevrons /></button></Collapse>
            <Grip />
            <ToolGrid>
                {tools.map(([name, title, more], i) => (
                    <Tool key={name} $on={i === 0} aria-label={title}>
                        {name === 'pin' || name === 'hand' ? (
                            <svg width="24" height="24" viewBox="0 0 24 24">
                                {name === 'pin'
                                    ? <g transform="rotate(45 12 12)"><MdPushPin x="2" y="1" size={20} /></g>
                                    : <FaHandPaper x="3" y="4" size={17} />}
                                <path d="M26 18.500v3.200h-3.200z" fill="currentColor" />
                            </svg>
                        ) : <Icon name={name} more={more} />}
                    </Tool>
                ))}
            </ToolGrid>
            <ToolRule />
            <ModeRow $h={22} $mt={9}>
                <button aria-label="カラー"><Paint $bg="#fff" /></button>
                <button aria-label="グラデーション"><Paint $bg="linear-gradient(90deg, #fff, #222)" /></button>
                <button aria-label="なし"><Paint $bg="linear-gradient(135deg, #fff 42%, #e2402f 42% 58%, #fff 58%)" /></button>
            </ModeRow>
            <ModeRow $h={20} $mt={5}>
                {['標準描画', '背面描画', '内側描画'].map((mode, i) => (
                    <button key={mode} aria-label={mode}>
                        <svg width="14" height="14" viewBox="0 0 14 14">
                            {i === 1 && <path d="M7 7h5.500v5.500H7z" fill="#c4c4c4" />}
                            <circle cx="6.500" cy="6" r="4" fill="#777" stroke="currentColor" strokeWidth="1.500" />
                            {i === 0 && <path d="M6 6h7v6.500H6z" fill="#c4c4c4" />}
                            {i === 2 && <path d="M6.500 6h3.500v1.500L8 9.500H6.500z" fill="#c4c4c4" />}
                        </svg>
                    </button>
                ))}
            </ModeRow>
            <Below>
                <IconButton aria-label="スクリーンモード"><Icon name="screens" /></IconButton>
                <IconButton aria-label="ツールバーを編集">
                    <svg width="16" height="4" viewBox="0 0 16 4" fill="currentColor"><circle cx="2" cy="2" r="2" /><circle cx="8" cy="2" r="2" /><circle cx="14" cy="2" r="2" /></svg>
                </IconButton>
            </Below>
        </Column>
    )
}

const Tri = ({ dir, bar }) => (
    <svg width="10" height="10" viewBox="0 0 10 10">
        <path d={dir === 'l' ? 'M8 1v8L3 5z' : 'M2 1v8l5-4z'} fill="currentColor" />
        {bar && <path d={dir === 'l' ? 'M1.500 1v8' : 'M8.500 1v8'} stroke="currentColor" strokeWidth="1.300" />}
    </svg>
)

function Document() {
    return (
        <Column>
            <Tabs>
                <DocTab>
                    <svg width="7" height="7" viewBox="0 0 7 7"><path d="M.5.5l6 6M6.500.5l-6 6" stroke="currentColor" strokeWidth="1.500" /></svg>
                    名称未設定-1* @ 28.24% (RGB/プレビュー)
                </DocTab>
            </Tabs>
            <DocArea>
                <Canvas>
                    <Artboard>
                        <SelectedPath><Anchor /><LiveCorner /></SelectedPath>
                    </Artboard>
                </Canvas>
                <VScroll>
                    <ChevronUp size={16} />
                    <Thumb $w={15} $h={27} />
                    <ChevronDown size={16} />
                </VScroll>
                <StatusBar>
                    <StatusSelect $w={71} $mr={5}>
                        <select aria-label="表示倍率" defaultValue="28.24%"><option>28.24%</option></select>
                        <Down />
                    </StatusSelect>
                    <StatusCell $w={38} $dim><Tri dir="l" bar /><Tri dir="l" /></StatusCell>
                    <StatusSelect $w={62} $mr={3}>
                        <select aria-label="アートボード番号" defaultValue="1"><option>1</option></select>
                        <Down />
                    </StatusSelect>
                    <StatusCell $w={40} $dim><Tri /><Tri bar /></StatusCell>
                    <StatusCell $w={216}>選択</StatusCell>
                    <StatusCell $w={14}><Tri /></StatusCell>
                    <HScroll>
                        <ChevronLeft size={16} />
                        <Thumb $w={27} $h={15} />
                        <ChevronRight size={16} />
                    </HScroll>
                </StatusBar>
            </DocArea>
        </Column>
    )
}

function Dock() {
    return (
        <Column>
            <Collapse $side="flex-end"><button aria-label="展開"><Chevrons /></button></Collapse>
            <DockGroup>
                <Grip $m="3px 0 2px" />
                <IconButton aria-label="リンク"><Icon name="link" /></IconButton>
                <IconButton aria-label="情報"><FaInfoCircle size={17} /></IconButton>
            </DockGroup>
            <DockGroup>
                <Grip $m="3px 0 2px" />
                <IconButton aria-label="アセット"><Icon name="asset" /></IconButton>
                <IconButton aria-label="アピアランス"><Icon name="appearance" /></IconButton>
            </DockGroup>
            <DockGroup>
                <Grip $m="3px 0 2px" />
                <IconButton aria-label="スウォッチ"><Icon name="swatches" /></IconButton>
                <IconButton aria-label="アクション"><Icon name="gears" /></IconButton>
                <IconButton aria-label="再生"><Icon name="play" /></IconButton>
            </DockGroup>
        </Column>
    )
}

function Panels() {
    return (
        <Column $bg="#404040">
            <Collapse $side="flex-end"><button aria-label="たたむ"><Chevrons flip /></button></Collapse>
            <Panel>
                <Tabset tabs={[['整列', 48, true, true], ['スウォッチ', 46], ['カラー', 45], ['プロパティ', 46], ['カラーガイド', 45], ['アセットの書き出し', 49]]} />
                <AlignBody>
                    <h2>オブジェクトの整列 :</h2>
                    <AlignRow>
                        <Buttons names={['hLeft', 'hCenter', 'hRight']} />
                        <Buttons names={['vTop', 'vMiddle', 'vBottom']} />
                    </AlignRow>
                    <h2>オブジェクトの分布 :</h2>
                    <AlignRow>
                        <Buttons names={['dTop', 'dMiddle', 'dBottom']} />
                        <Buttons names={['dLeft', 'dCenter', 'dRight']} />
                    </AlignRow>
                    <SpacingRow>
                        <div>
                            <h2>等間隔に分布 :</h2>
                            <SpacingTools>
                                <Buttons names={['vSpace', 'hSpace']} gap={10} />
                                <NumberBox $w={98} $off>
                                    <button disabled aria-label="間隔の増減"><Stepper /></button>
                                    <input aria-label="間隔値" disabled defaultValue="0 px" />
                                </NumberBox>
                            </SpacingTools>
                        </div>
                        <div>
                            <h2>整列 :</h2>
                            <IconButton $w={38} aria-label="整列の基準">
                                <IconSet $gap={1}>
                                    <Icon name="alignTo" size={22} />
                                    <ChevronDown size={14} style={{ alignSelf: 'center' }} />
                                </IconSet>
                            </IconButton>
                        </div>
                    </SpacingRow>
                </AlignBody>
            </Panel>
            <Panel>
                <Tabset tabs={[['線', 48, true, true], ['グラデーション', 100], ['透明', 42]]} />
                <StrokeBody>
                    <label htmlFor="weight">線幅 :</label>
                    <NumberBox $w={106}>
                        <button aria-label="線幅の増減"><Stepper /></button>
                        <input id="weight" defaultValue="1 pt" />
                        <button aria-label="線幅を選ぶ"><Down /></button>
                    </NumberBox>
                </StrokeBody>
            </Panel>
            <Panel>
                <Tabset tabs={[['文字', 48, true, true], ['段落', 42], ['OpenType', 77]]} />
            </Panel>
            <Panel>
                <Tabset tabs={[['パスファインダー', 110, true]]} />
            </Panel>
            <Panel $grow>
                <Tabset tabs={[['レイヤー', 65, true], ['アートボード', 87]]} />
                <LayerList>
                    <LayerRow $on>
                        <EyeCell aria-label="レイヤー 1 を隠す"><Eye /></EyeCell>
                        <ColorBar />
                        <Down size={15} />
                        <LayerThumb />
                        レイヤー 1
                        <Target>
                            <svg width="13" height="13"><circle cx="6.500" cy="6.500" r="4" fill="none" stroke="#c8c8c8" /></svg>
                            <SelectedMark />
                        </Target>
                    </LayerRow>
                    <LayerRow>
                        <EyeCell aria-label="長方形を隠す"><Eye /></EyeCell>
                        <ColorBar $nested />
                        <LayerThumb $nested />
                        &lt;長方形&gt;
                        <Target>
                            <svg width="13" height="13"><circle cx="6.500" cy="6.500" r="6" fill="none" stroke="#c8c8c8" /><circle cx="6.500" cy="6.500" r="3.500" fill="none" stroke="#c8c8c8" /></svg>
                            <SelectedMark />
                        </Target>
                    </LayerRow>
                </LayerList>
                <LayerFooter>
                    <span>1 レイヤー</span>
                    <IconSet $gap={3}>
                        {['export', 'find', 'mask', 'sublayer', 'add', 'trash'].map(n => (
                            <IconButton key={n} $h={20} $dim={n === 'trash'} aria-label={n}><Icon name={n} /></IconButton>
                        ))}
                    </IconSet>
                </LayerFooter>
            </Panel>
        </Column>
    )
}

export default function App() {
    return (
        <Screen>
            <GlobalStyle />
            <TopMenu />
            <Window>
                <Header />
                <Workspace>
                    <ToolBox />
                    <Document />
                    <Dock />
                    <Panels />
                </Workspace>
            </Window>
        </Screen>
    )
}
